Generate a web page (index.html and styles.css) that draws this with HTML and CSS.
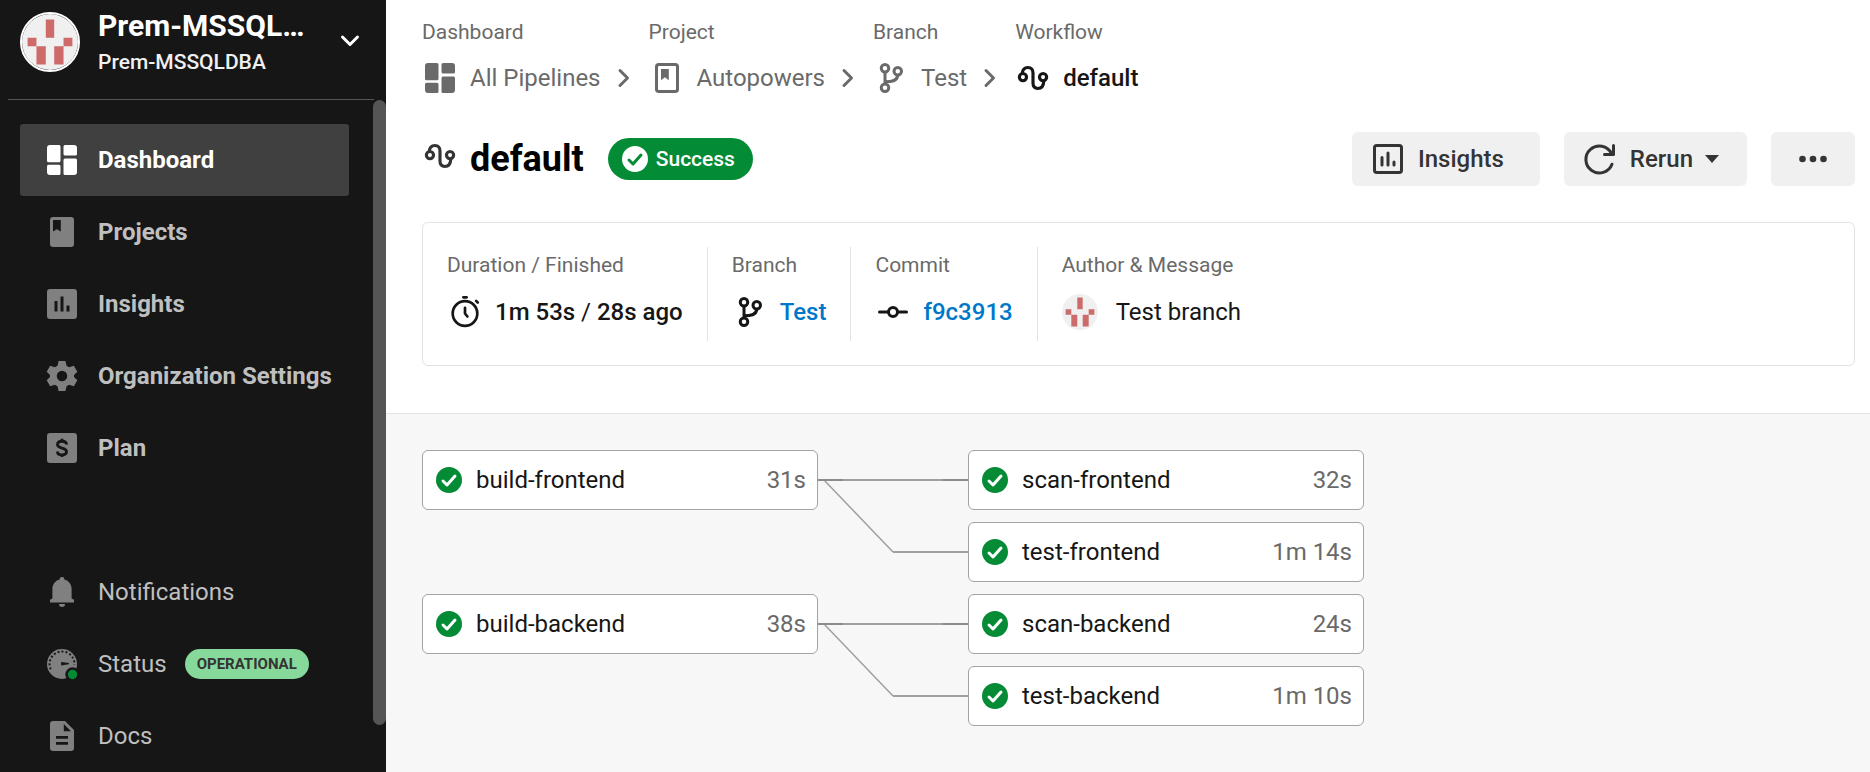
FILE: index.html
```html
<!DOCTYPE html>
<html lang="en">
<head>
<meta charset="utf-8">
<title>default - Workflow</title>
<link rel="stylesheet" href="styles.css">
</head>
<body>
<svg class="defs" aria-hidden="true">
  <symbol id="i-dashboard" viewBox="0 0 24 24"><path fill="currentColor" d="M4 2h6a1 1 0 0 1 1 1v9.500a1 1 0 0 1-1 1H3a1 1 0 0 1-1-1V4a2 2 0 0 1 2-2zM14 2h6a2 2 0 0 1 2 2v4a1 1 0 0 1-1 1h-7a1 1 0 0 1-1-1V3a1 1 0 0 1 1-1zM14 11h7a1 1 0 0 1 1 1v8a2 2 0 0 1-2 2h-6a1 1 0 0 1-1-1v-9a1 1 0 0 1 1-1zM3 15.200h7a1 1 0 0 1 1 1V21a1 1 0 0 1-1 1H4a2 2 0 0 1-2-2v-3.800a1 1 0 0 1 1-1z"/></symbol>
  <symbol id="i-project" viewBox="0 0 24 24"><path fill="currentColor" fill-rule="evenodd" d="M6 2h12a2 2 0 0 1 2 2v16a2 2 0 0 1-2 2H6a2 2 0 0 1-2-2V4a2 2 0 0 1 2-2zm0 2v7.700l2.600-1.500 2.600 1.500V4z"/></symbol>
  <symbol id="i-project-line" viewBox="0 0 24 24"><rect x="5" y="3" width="14" height="18" rx="1.500" fill="none" stroke="currentColor" stroke-width="2"/><path fill="currentColor" d="M8 6h5.200v7.500l-2.600-2-2.600 2z"/></symbol>
  <symbol id="i-insights" viewBox="0 0 24 24"><path fill="currentColor" fill-rule="evenodd" d="M4 2h16a2 2 0 0 1 2 2v16a2 2 0 0 1-2 2H4a2 2 0 0 1-2-2V4a2 2 0 0 1 2-2zm3 8v7h2v-7zm4-3v10h2V7zm4 6v4h2v-4z"/></symbol>
  <symbol id="i-insights-line" viewBox="0 0 24 24"><rect x="3" y="3" width="18" height="18" rx="1.500" fill="none" stroke="currentColor" stroke-width="2"/><path d="M8 11v5M12 8v8M16 14v2" fill="none" stroke="currentColor" stroke-width="2" stroke-linecap="round"/></symbol>
  <symbol id="i-gear" viewBox="0 0 24 24"><path fill="currentColor" fill-rule="evenodd" d="M9.700 2h4.600l.7 3.100 1.800 1 3.100-.9 2.300 3.900-2.200 2.200v1.400l2.200 2.200-2.300 3.900-3.100-.9-1.800 1-.7 3.100H9.700L9 18.900l-1.800-1-3.100.9-2.300-3.900L4 12.700v-1.400L1.800 9.100l2.300-3.900 3.100.9 1.800-1zM12 8.500a3.500 3.500 0 1 0 0 7 3.500 3.500 0 0 0 0-7z"/></symbol>
  <symbol id="i-plan" viewBox="0 0 24 24"><rect x="2" y="2" width="20" height="20" rx="2" fill="currentColor"/><path d="M15 9.700C15 8 13.800 7.500 12 7.500s-3 .8-3 2.200c0 3.200 6 1.500 6 4.700 0 1.500-1.300 2.200-3 2.200s-3-.7-3-2.300M12 5.800v2M12 16v2" fill="none" stroke="#161616" stroke-width="1.900"/></symbol>
  <symbol id="i-bell" viewBox="0 0 24 24"><path fill="currentColor" d="M12 2a1.500 1.500 0 0 1 1.500 1.600C16.700 4.400 18.400 7 18.400 10v6.300l1.600.9V19H4v-1.800l1.600-.9V10c0-3 1.700-5.600 4.900-6.400A1.500 1.500 0 0 1 12 2zM10 20h4a2 2 0 0 1-4 0z"/></symbol>
  <symbol id="i-status" viewBox="0 0 24 24"><circle cx="12" cy="12" r="10" fill="currentColor"/><path d="M4.500 15.500A8.300 8.300 0 1 1 20.300 12.500" fill="none" stroke="#161616" stroke-width="1.300" stroke-dasharray="1.300 1.400"/><path d="M11.400 10.700l5.200.7v.8l-5.200.8z" fill="#161616"/><circle cx="19" cy="19" r="4.800" fill="#161616"/><circle cx="19" cy="19" r="3.100" fill="#048b35"/></symbol>
  <symbol id="i-docs" viewBox="0 0 24 24"><path fill="currentColor" fill-rule="evenodd" d="M6 2h8l6 6v12a2 2 0 0 1-2 2H6a2 2 0 0 1-2-2V4a2 2 0 0 1 2-2zm7.200 2v4.800H18zM8 12v1.900h8V12zm0 4v1.900h8V16z"/></symbol>
  <symbol id="i-flow" viewBox="0 0 24 24"><g fill="none" stroke="currentColor" stroke-width="2.100"><circle cx="5.300" cy="11.400" r="2.400"/><circle cx="18.700" cy="11.400" r="2.400"/><path d="M4.700 9.200C5 6.300 6.600 5 8.600 5c2.300 0 3.400 1.400 3.400 3.600v6.800c0 2.200 1.200 3.600 3.200 3.600 2.400 0 3.900-1.600 4-5.200"/></g></symbol>
  <symbol id="i-branch" viewBox="0 0 24 24"><g fill="none" stroke="currentColor" stroke-width="2"><circle cx="8" cy="5.500" r="2.500"/><circle cx="8" cy="18.500" r="2.500"/><circle cx="16.500" cy="7.500" r="2.500"/><path d="M8 8v8M8 14.500c4 0 8.500-.3 8.500-4.500"/></g></symbol>
  <symbol id="i-commit" viewBox="0 0 24 24"><g fill="none" stroke="currentColor" stroke-width="2" stroke-linecap="round"><circle cx="12" cy="12" r="3"/><path d="M3 12h6M15 12h6"/></g></symbol>
  <symbol id="i-timer" viewBox="0 0 24 24"><g fill="none" stroke="currentColor" stroke-width="1.800" stroke-linecap="round"><circle cx="12" cy="13" r="8.200"/><path d="M10.900 2.200h2.200M19.400 4.600l1.100 1.100" /><path d="M12 9.200V13l1.600 2" stroke-linejoin="round"/></g></symbol>
  <symbol id="i-rerun" viewBox="0 0 24 24"><path d="M20 15.500A9 9 0 1 1 19.600 8.200M21 3v6M21 9h-6" fill="none" stroke="currentColor" stroke-width="2" stroke-linecap="round"/></symbol>
  <symbol id="i-chevron" viewBox="0 0 24 24"><path d="M7 4.500l7.500 7.500L7 19.500" fill="none" stroke="currentColor" stroke-width="3" stroke-linecap="round" stroke-linejoin="round"/></symbol>
  <symbol id="i-more" viewBox="0 0 28 28"><g fill="currentColor"><circle cx="3.500" cy="14" r="3.300"/><circle cx="14" cy="14" r="3.300"/><circle cx="24.500" cy="14" r="3.300"/></g></symbol>
  <symbol id="i-check" viewBox="0 0 26 26"><circle cx="13" cy="13" r="13" class="disc"/><path d="M7 14l4 4 8-9" class="tick" fill="none" stroke-width="3" stroke-linecap="round" stroke-linejoin="round"/></symbol>
  <symbol id="i-avatar" viewBox="0 0 60 60"><rect width="60" height="60" fill="#f0f0f0"/><path fill="#cd6a6a" d="M25.500 6h9v19.500h-9zM6 25.500h9.500v9H6zM44.500 25.500H54v9h-9.500zM15.500 34.500h10V54h-10zM34.500 34.500h10V54h-10z"/></symbol>
</svg>

<div class="app">
  <aside class="sidebar">
    <button class="org" type="button">
      <svg class="org-avatar"><use href="#i-avatar"/></svg>
      <span class="org-names"><strong class="org-name">Prem-MSSQL…</strong><span class="org-sub">Prem-MSSQLDBA</span></span>
      <svg class="org-chevron"><use href="#i-chevron"/></svg>
    </button>
    <div class="sidebar-body">
      <nav class="nav">
        <a class="nav-item active" href="#"><svg class="icon"><use href="#i-dashboard"/></svg>Dashboard</a>
        <a class="nav-item" href="#"><svg class="icon"><use href="#i-project"/></svg>Projects</a>
        <a class="nav-item" href="#"><svg class="icon"><use href="#i-insights"/></svg>Insights</a>
        <a class="nav-item" href="#"><svg class="icon"><use href="#i-gear"/></svg>Organization Settings</a>
        <a class="nav-item" href="#"><svg class="icon"><use href="#i-plan"/></svg>Plan</a>
        <a class="nav-item light first" href="#"><svg class="icon"><use href="#i-bell"/></svg>Notifications</a>
        <a class="nav-item light" href="#"><svg class="icon"><use href="#i-status"/></svg>Status<span class="tag">OPERATIONAL</span></a>
        <a class="nav-item light" href="#"><svg class="icon"><use href="#i-docs"/></svg>Docs</a>
      </nav>
      <div class="scroll-thumb"></div>
    </div>
  </aside>

  <main class="main">
    <header class="top">
      <nav class="crumbs" aria-label="Breadcrumb">
        <div class="crumb"><span class="label">Dashboard</span><a class="crumb-link" href="#"><svg class="icon"><use href="#i-dashboard"/></svg>All Pipelines</a></div>
        <svg class="sep"><use href="#i-chevron"/></svg>
        <div class="crumb"><span class="label">Project</span><a class="crumb-link" href="#"><svg class="icon"><use href="#i-project-line"/></svg>Autopowers</a></div>
        <svg class="sep"><use href="#i-chevron"/></svg>
        <div class="crumb"><span class="label">Branch</span><a class="crumb-link" href="#"><svg class="icon"><use href="#i-branch"/></svg>Test</a></div>
        <svg class="sep"><use href="#i-chevron"/></svg>
        <div class="crumb"><span class="label">Workflow</span><a class="crumb-link current" href="#"><svg class="icon"><use href="#i-flow"/></svg>default</a></div>
      </nav>

      <div class="title-row">
        <svg class="icon title-icon"><use href="#i-flow"/></svg>
        <h1 class="title">default</h1>
        <span class="badge"><svg class="check invert"><use href="#i-check"/></svg>Success</span>
        <div class="actions">
          <button class="btn btn-insights" type="button"><svg class="icon"><use href="#i-insights-line"/></svg>Insights</button>
          <button class="btn btn-rerun" type="button"><svg class="icon"><use href="#i-rerun"/></svg>Rerun<span class="caret"></span></button>
          <button class="btn btn-more" type="button" aria-label="More"><svg class="more"><use href="#i-more"/></svg></button>
        </div>
      </div>

      <section class="card">
        <div class="cell"><span class="label">Duration / Finished</span><span class="value"><svg class="icon"><use href="#i-timer"/></svg><span>1m 53s <span class="slash">/</span> 28s ago</span></span></div>
        <div class="cell"><span class="label">Branch</span><span class="value"><svg class="icon"><use href="#i-branch"/></svg><a href="#">Test</a></span></div>
        <div class="cell"><span class="label">Commit</span><span class="value"><svg class="icon"><use href="#i-commit"/></svg><a href="#">f9c3913</a></span></div>
        <div class="cell"><span class="label">Author &amp; Message</span><span class="value message"><svg class="author"><use href="#i-avatar"/></svg>Test branch</span></div>
      </section>
    </header>

    <section class="graph">
      <div class="jobs builds">
        <a class="job" href="#"><svg class="check"><use href="#i-check"/></svg>build-frontend<span class="time">31s</span></a>
        <a class="job" href="#"><svg class="check"><use href="#i-check"/></svg>build-backend<span class="time">38s</span></a>
      </div>
      <svg class="links" viewBox="0 0 150 276">
        <g fill="none" stroke="#a0a0a0">
          <path stroke-width="2" d="M0 30H150M75 102H150M0 174H150M75 246H150"/>
          <path stroke-width="1.500" d="M6 30L75 102M6 174L75 246"/>
          <path stroke="#8c8c8c" stroke-width="2" d="M0 30H25M125 30H150M0 174H25M125 174H150"/>
        </g>
      </svg>
      <div class="jobs">
        <a class="job" href="#"><svg class="check"><use href="#i-check"/></svg>scan-frontend<span class="time">32s</span></a>
        <a class="job" href="#"><svg class="check"><use href="#i-check"/></svg>test-frontend<span class="time">1m 14s</span></a>
        <a class="job" href="#"><svg class="check"><use href="#i-check"/></svg>scan-backend<span class="time">24s</span></a>
        <a class="job" href="#"><svg class="check"><use href="#i-check"/></svg>test-backend<span class="time">1m 10s</span></a>
      </div>
    </section>
  </main>
</div>
</body>
</html>
```
FILE: styles.css
```css
* { box-sizing: border-box; }
body {
  margin: 0;
  font-family: Roboto, "Liberation Sans", sans-serif;
  font-size: 24px;
  line-height: 36px;
  color: #161616;
  background: #fff;
}
a { color: inherit; text-decoration: none; }
button { font: inherit; border: 0; cursor: pointer; }
svg { display: block; flex: none; }
.defs { position: absolute; width: 0; height: 0; }
.icon { width: 36px; height: 36px; }

.app { display: flex; height: 100vh; overflow: hidden; }

/* Sidebar */
.sidebar { flex: none; width: 386px; background: #161616; display: flex; flex-direction: column; }
.org {
  display: flex;
  align-items: center;
  margin: 0 12px 0 8px;
  padding: 6px 12px 21px;
  background: none;
  border-bottom: 1px solid #555;
  color: #fff;
  text-align: left;
}
.org-avatar { width: 60px; height: 60px; border-radius: 50%; border: 2px solid #fff; }
.org-names { display: flex; flex-direction: column; width: 208px; margin: 0 32px 0 18px; }
.org-name { font-size: 30px; line-height: 40px; font-weight: 700; white-space: nowrap; }
.org-sub { font-size: 21px; line-height: 32px; font-weight: 500; color: #f0f0f0; }
.org-chevron { width: 24px; height: 24px; transform: rotate(90deg); }
.sidebar-body { flex: 1; min-height: 0; display: flex; justify-content: space-between; overflow: hidden; }
.nav { width: 349px; padding: 24px 0 0 20px; }
.nav-item {
  display: flex;
  align-items: center;
  gap: 18px;
  height: 72px;
  padding-left: 24px;
  border-radius: 3px;
  font-weight: 700;
  color: #bfbfbf;
  white-space: nowrap;
}
.nav-item .icon { color: #808080; }
.nav-item.active { background: #404040; color: #fff; }
.nav-item.active .icon { color: #fff; }
.nav-item.light { font-weight: 400; }
.nav-item.first { margin-top: 72px; }
.tag { padding: 0 12px; border-radius: 15px; background: #86d99a; color: #343434; font-size: 15px; line-height: 30px; font-weight: 700; }
.scroll-thumb { width: 13px; height: 93%; border-radius: 7px; background: #555; }

/* Header */
.main { flex: 1; min-width: 0; display: flex; flex-direction: column; }
.top { padding: 16px 15px 47px 36px; border-bottom: 1px solid #e3e3e3; }
.label { font-size: 21px; line-height: 32px; color: #6a6a6a; }
.crumbs { display: flex; align-items: flex-end; gap: 12px; color: #6a6a6a; }
.crumb { display: flex; flex-direction: column; gap: 12px; }
.crumb-link { display: flex; align-items: center; gap: 12px; }
.crumb-link.current { color: #161616; font-weight: 500; }
.sep { width: 24px; height: 24px; margin-bottom: 6px; }
.title-row { display: flex; align-items: center; margin-top: 36px; }
.title-icon { margin-bottom: 6px; color: #343434; }
.title { margin: 0 24px 0 12px; font-size: 36px; line-height: 54px; font-weight: 700; color: #000; }
.badge {
  display: flex;
  align-items: center;
  gap: 8px;
  height: 42px;
  padding: 0 18px 0 14px;
  border-radius: 21px;
  background: #048b35;
  color: #fff;
  font-size: 21px;
  font-weight: 500;
}
.check { width: 26px; height: 26px; fill: #048b35; stroke: #fff; }
.check.invert { fill: #fff; stroke: #048b35; }
.disc { stroke: none; }
.actions { display: flex; gap: 24px; margin-left: auto; }
.btn { display: flex; align-items: center; gap: 12px; height: 54px; border-radius: 6px; background: #f0f0f0; color: #343434; font-weight: 500; }
.btn-insights { padding: 0 36px 0 18px; }
.btn-rerun { padding: 0 28px 0 18px; }
.btn-more { padding: 0 28px; }
.more { width: 28px; height: 28px; }
.caret { border: 7px solid transparent; border-top: 8px solid #343434; border-bottom: 0; }

/* Summary card */
.card { display: flex; margin-top: 36px; padding: 24px 0; border: 1px solid #e3e3e3; border-radius: 6px; }
.cell { display: flex; flex-direction: column; gap: 13px; padding: 2px 24px 11px; border-right: 1px solid #e3e3e3; }
.cell:last-child { border-right: 0; }
.value { display: flex; align-items: center; gap: 12px; font-weight: 500; white-space: nowrap; }
.value a { color: #0078ca; }
.value.message { gap: 18px; font-weight: 400; }
.slash { font-weight: 400; }
.author { width: 36px; height: 36px; border-radius: 50%; }

/* Job graph */
.graph { flex: 1; display: flex; align-items: flex-start; padding: 36px; background: #f7f7f7; }
.jobs { display: flex; flex-direction: column; gap: 12px; width: 396px; }
.jobs.builds { gap: 84px; }
.job { display: flex; align-items: center; gap: 14px; height: 60px; padding: 0 11px 0 13px; border: 1px solid #a3a3a3; border-radius: 6px; background: #fff; }
.time { margin-left: auto; color: #6a6a6a; }
.links { width: 150px; height: 276px; }
```
